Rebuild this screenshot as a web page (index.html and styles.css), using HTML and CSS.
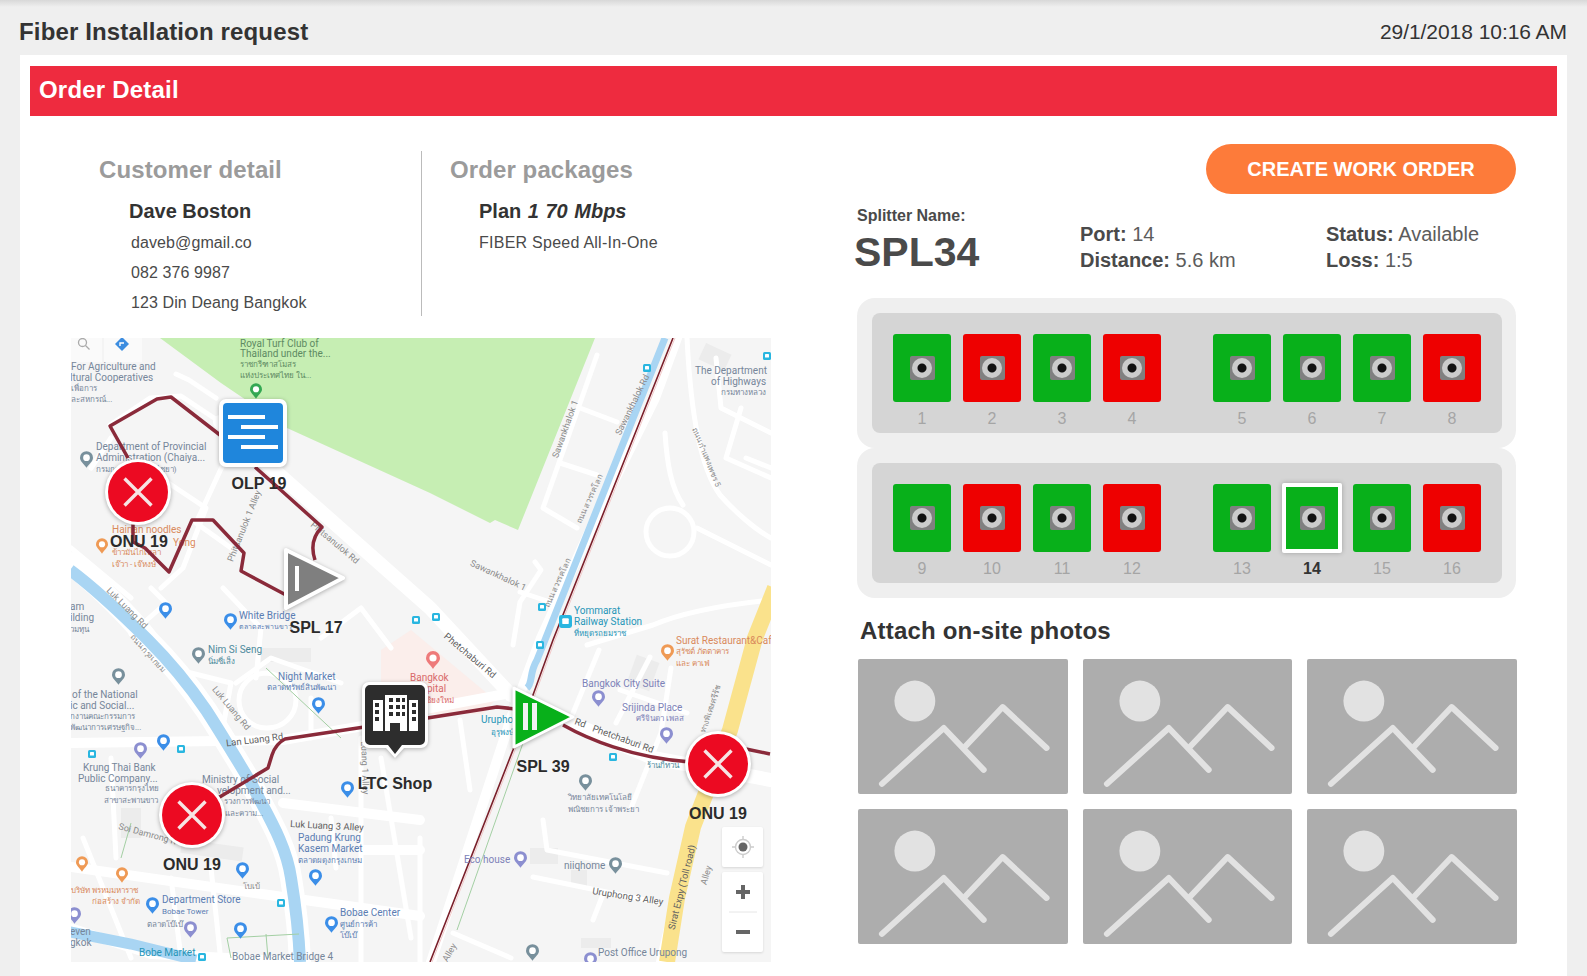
FILE: index.html
```html
<!DOCTYPE html>
<html lang="en">
<head>
    <meta charset="UTF-8">
    <meta name="viewport" content="width=device-width, initial-scale=1.0">
    <title>Fiber Installation request</title>
    <link rel="stylesheet" href="styles.css">
</head>
<body>
    <svg class="defs" width="0" height="0" aria-hidden="true">
        <symbol id="photo-icon" viewBox="0 0 210 135">
            <circle class="ph-sun" cx="57" cy="42" r="20.5"/>
            <polyline class="ph-line" points="24,125 86,69 126,111"/>
            <polyline class="ph-line" points="107,88 145,48 189,89"/>
        </symbol>
        <symbol id="pin" viewBox="0 0 14 18" overflow="visible">
            <path fill="currentColor" d="M7 0a7 7 0 0 1 7 7c0 4-4 6-7 11C4 13 0 11 0 7a7 7 0 0 1 7-7z"/>
            <circle cx="7" cy="7" r="3.6" fill="#fff"/>
        </symbol>
        <symbol id="bus" viewBox="0 0 8 8">
            <rect width="8" height="8" rx="1.5" fill="#29b6e0"/>
            <rect x="2" y="2" width="4" height="3.6" rx=".6" fill="#fff"/>
        </symbol>
        <symbol id="onu" viewBox="-34 -34 68 68" overflow="visible">
            <circle r="33" fill="#fff"/>
            <circle r="30" fill="#ec0a22"/>
            <path d="M-13.5-13.5L13.5 13.5M13.5-13.5L-13.5 13.5" stroke="#f6e4e4" stroke-width="3.4"/>
        </symbol>
    </svg>

    <header class="page-head">
        <h1>Fiber Installation request</h1>
        <span class="page-date">29/1/2018 10:16 AM</span>
    </header>

    <main class="panel">
        <div class="order-bar">Order Detail</div>
        <div class="order-body">
            <section class="left-col">
                <div class="info-row">
                    <div class="info-col customer">
                        <h2>Customer detail</h2>
                        <p class="info-name">Dave Boston</p>
                        <p class="info-line">daveb@gmail.co</p>
                        <p class="info-line">082 376 9987</p>
                        <p class="info-line">123 Din Deang Bangkok</p>
                    </div>
                    <div class="info-col packages">
                        <h2>Order packages</h2>
                        <p class="info-name">Plan <em>1 70 Mbps</em></p>
                        <p class="info-line">FIBER Speed All-In-One</p>
                    </div>
                </div>

                <svg class="map" viewBox="0 0 700 624" width="700" height="624">
                    <!-- areas -->
                    <polygon class="m-park" points="89,0 150,45 216,90 359,155 419,185 424,182 447,192 524,0"/>
                    <polygon class="m-hospital" points="310,312 340,292 424,362 412,376 310,376"/>
                    <rect class="m-block" x="190" y="310" width="50" height="14"/>
                    <rect class="m-block" x="630" y="10" width="28" height="18" transform="rotate(25 644 19)"/>
                    <rect class="m-block" x="110" y="505" width="62" height="14" transform="rotate(8 140 512)"/>
                    <rect class="m-block" x="459" y="510" width="28" height="16"/>
                    <rect class="m-block" x="500" y="532" width="16" height="16"/>
                    <rect class="m-block" x="510" y="600" width="30" height="10"/>
                    <rect class="m-block" x="560" y="320" width="24" height="30" transform="rotate(20 572 335)"/>
                    <rect class="m-block" x="50" y="470" width="20" height="30"/>

                    <!-- roads -->
                    <g class="m-roads">
                        <path class="r-wide" d="M149 84L359 270L440 357L500 385L582 420L700 442"/>
                        <path class="r-canal" d="M-1 225C30 250 60 280 77 302C100 325 120 350 135 372C150 395 165 420 180 445C195 475 215 505 220 540C225 570 228 600 229 624"/>
                        <path class="r-mid" d="M-1 590L80 616L230 624"/>
                        <path class="r-mid" d="M-1 405L212 402L292 388L349 372L440 355"/>
                        <path class="r-mid" d="M606 0L584 60L520 190L470 300L440 380L360 624"/>
                        <path class="r-mid" d="M720 236L684 300L659 392L622 489L590 624"/>
                        <path class="r-mid" d="M0 529L212 559L349 578"/>
                        <path class="r-mid" d="M212 465L349 482M292 512L349 512"/>
                        <path class="r-thin" d="M616 0C620 80 630 130 649 157C665 175 685 192 700 200"/>
                        <path class="r-thin" d="M594 95C596 125 600 150 612 167M626 190L700 227"/>
                        <circle class="r-ring" cx="599" cy="194" r="24"/>
                        <path class="r-thin" d="M526 17L472 170L506 190M509 70L546 84M489 125L526 137"/>
                        <path class="r-thin" d="M464 224L470 232L449 264L442 307M449 254L479 264"/>
                        <path class="r-thin" d="M516 307L582 287C610 275 650 267 700 262"/>
                        <path class="r-thin" d="M645 20L650 70L700 95M670 70L655 120L700 140M675 120L700 130"/>
                        <path class="r-thin" d="M472 482L476 512L596 535M462 539L589 565M522 582L531 559"/>
                        <path class="r-thin" d="M382 595L440 620M389 382L399 452"/>
                        <path class="r-thin" d="M549 352L616 375M579 319L545 385M528 312L500 380"/>
                        <path class="r-thin" d="M600 330L590 395L560 470"/>
                        <path class="r-thin" d="M39 87L79 60L110 58L149 84M105 36L118 42L145 60"/>
                        <path class="r-thin" d="M60 120L120 160L135 170L112 230L90 250M40 100L20 130M0 210L60 260"/>
                        <path class="r-thin" d="M155 120L125 185L160 210M152 250L190 290L185 340"/>
                        <path class="r-thin" d="M100 330L160 345L150 400M165 345L200 320L270 345M240 360L240 400"/>
                        <path class="r-thin" d="M196 335C215 338 225 350 225 362C225 378 212 390 196 390C180 390 168 378 168 362C168 348 180 335 196 335"/>
                        <path class="r-thin" d="M290 400L290 624M40 420L45 520M12 500L60 620M100 540L110 620M140 530L150 624"/>
                        <path class="r-thin" d="M310 420L340 600M260 480L265 530M349 500L349 624"/>
                        <path class="r-thin" d="M60 296L95 265L80 250M320 310L290 270L250 300"/>
                    </g>

                    <!-- water -->
                    <path class="m-canal" d="M-1 232C30 255 60 285 77 302C100 325 120 350 135 372C150 395 165 420 180 445C195 475 215 505 220 540C225 570 228 600 229 624"/>
                    <path class="m-canal-sm" d="M594 0L472 307L466 322C458 335 462 345 456 350"/>
                    <path class="m-canal-bt" d="M-1 594L60 606L125 622"/>

                    <!-- expressway -->
                    <path class="m-highway" d="M704 250L684 300L659 392L622 489L606 560L596 624"/>

                    <!-- rail and thin lines -->
                    <path class="m-green" d="M452 405L386 592M60 485L50 520M195 330L270 400"/>
                    <path class="m-green" d="M156 600L228 596M156 600L160 620M195 596L197 620"/>
                    <path class="m-rail-pale" d="M604 0L484 302L444 412L361 624"/>
                    <path class="m-rail" d="M602 0L482 302L442 412L359 624"/>

                    <!-- map labels -->
                    <g class="m-labels">
                        <text class="t-park" x="169" y="9">Royal Turf Club of</text>
                        <text class="t-park" x="169" y="19">Thailand under the...</text>
                        <text class="t-park t-sm" x="169" y="29">ราชกรีฑาสโมสร</text>
                        <text class="t-park t-sm" x="169" y="40">แห่งประเทศไทย ใน...</text>
                        <text class="t-gov" x="0" y="32">For Agriculture and</text>
                        <text class="t-gov" x="-1" y="43">ltural Cooperatives</text>
                        <text class="t-gov t-sm" x="0" y="53">เพื่อการ</text>
                        <text class="t-gov t-sm" x="0" y="64">ละสหกรณ์...</text>
                        <text class="t-gov" x="25" y="112">Department of Provincial</text>
                        <text class="t-gov" x="25" y="123">Administration (Chaiya...</text>
                        <text class="t-gov t-sm" x="25" y="134">กรมการปกครอง (ไชยา)</text>
                        <text class="t-food" x="41" y="195">Hainan noodles</text>
                        <text class="t-food" x="102" y="208">Yong</text>
                        <text class="t-food t-sm" x="41" y="217">ข้าวมันไก่เหลา</text>
                        <text class="t-food t-sm" x="41" y="229">เจ๊วา - เจ๊หงษ์</text>
                        <text class="t-gov" x="624" y="36">The Department</text>
                        <text class="t-gov" x="640" y="47">of Highways</text>
                        <text class="t-gov t-sm" x="650" y="57">กรมทางหลวง</text>
                        <text class="t-road" transform="translate(564 68) rotate(-64)" text-anchor="middle">Sawankhalok Rd</text>
                        <text class="t-road" transform="translate(497 92) rotate(-70)" text-anchor="middle">Sawankhalok 1</text>
                        <text class="t-road" transform="translate(426 240) rotate(25)" text-anchor="middle">Sawankhalok 1</text>
                        <text class="t-road t-sm" transform="translate(521 162) rotate(-66)" text-anchor="middle">ถนน สวรรคโลก</text>
                        <text class="t-road t-sm" transform="translate(489 246) rotate(-66)" text-anchor="middle">ถนน สวรรคโลก</text>
                        <text class="t-road t-sm" transform="translate(633 120) rotate(68)" text-anchor="middle">ถนน กำแพงเพชร 5</text>
                        <text class="t-rail" x="503" y="276">Yommarat</text>
                        <text class="t-rail" x="503" y="287">Railway Station</text>
                        <text class="t-rail t-sm" x="503" y="298">ที่หยุดรถยมราช</text>
                        <text class="t-food" x="605" y="306">Surat Restaurant&amp;Caf</text>
                        <text class="t-food t-sm" x="605" y="316">สุรัชต์ ภัตตาคาร</text>
                        <text class="t-food t-sm" x="605" y="328">และ คาเฟ่</text>
                        <text class="t-road" transform="translate(262 207) rotate(40)" text-anchor="middle">Phitsanulok Rd</text>
                        <text class="t-road" transform="translate(176 189) rotate(-68)" text-anchor="middle">Phitsanulok 1 Alley</text>
                        <text class="t-road" transform="translate(54 272) rotate(45)" text-anchor="middle">Luk Luang Rd</text>
                        <text class="t-road t-sm" transform="translate(75 317) rotate(48)" text-anchor="middle">ถนน กรุงเกษม</text>
                        <text class="t-shop" x="168" y="281">White Bridge</text>
                        <text class="t-shop t-xs" x="168" y="291">ตลาดสะพานขาว</text>
                        <text class="t-gov" x="-1" y="272">am</text>
                        <text class="t-gov" x="-1" y="283">ilding</text>
                        <text class="t-gov t-sm" x="-1" y="294">วมทุน</text>
                        <text class="t-teal" x="137" y="315">Nim Si Seng</text>
                        <text class="t-teal t-sm" x="137" y="326">นิ่มซี่เส็ง</text>
                        <text class="t-shop" x="207" y="342">Night Market</text>
                        <text class="t-shop t-sm" x="196" y="352">ตลาดทรัพย์สินพัฒนา</text>
                        <text class="t-road" transform="translate(158 372) rotate(50)" text-anchor="middle">Luk Luang Rd</text>
                        <text class="t-road-d" transform="translate(184 405) rotate(-7)" text-anchor="middle">Lan Luang Rd</text>
                        <text class="t-gov" x="1" y="360">of the National</text>
                        <text class="t-gov" x="-1" y="371">ic and Social...</text>
                        <text class="t-gov t-sm" x="-1" y="381">กงานคณะกรรมการ</text>
                        <text class="t-gov t-sm" x="-1" y="392">พัฒนาการเศรษฐกิจ...</text>
                        <text class="t-gov" x="12" y="433">Krung Thai Bank</text>
                        <text class="t-gov" x="7" y="444">Public Company...</text>
                        <text class="t-gov t-sm" x="34" y="453">ธนาคารกรุงไทย</text>
                        <text class="t-gov t-sm" x="33" y="465">สาขาสะพานขาว</text>
                        <text class="t-gov" x="131" y="445">Ministry of Social</text>
                        <text class="t-gov" x="146" y="456">velopment and...</text>
                        <text class="t-gov t-sm" x="153" y="466">รวงการพัฒนา</text>
                        <text class="t-gov t-sm" x="154" y="478">และความ...</text>
                        <text class="t-road" transform="translate(47 491) rotate(15)">Soi Damrong R</text>
                        <text class="t-road-d" transform="translate(219 489) rotate(3)">Luk Luang 3 Alley</text>
                        <text class="t-shop" x="227" y="503">Padung Krung</text>
                        <text class="t-shop" x="227" y="514">Kasem Market</text>
                        <text class="t-shop t-sm" x="227" y="525">ตลาดผดุงกรุงเกษม</text>
                        <text class="t-road t-sm" x="172" y="551">โบเบ้</text>
                        <text class="t-food t-sm" x="0" y="555">บริษัท พรหมมหาราช</text>
                        <text class="t-food t-sm" x="21" y="566">ก่อสร้าง จำกัด</text>
                        <text class="t-shop" x="91" y="565">Department Store</text>
                        <text class="t-shop t-sm" x="91" y="576">Bobae Tower</text>
                        <text class="t-gov t-sm" x="76" y="589">ตลาดโบ๊เบ๊</text>
                        <text class="t-shop" x="269" y="578">Bobae Center</text>
                        <text class="t-shop t-sm" x="269" y="589">ศูนย์การค้า</text>
                        <text class="t-shop t-sm" x="269" y="600">โบ๊เบ๊</text>
                        <text class="t-gov" x="-1" y="597">even</text>
                        <text class="t-gov" x="-1" y="608">gkok</text>
                        <text class="t-rail" x="68" y="618">Bobe Market</text>
                        <text class="t-gov" x="161" y="622">Bobae Market Bridge 4</text>
                        <text class="t-hosp" x="339" y="343">Bangkok</text>
                        <text class="t-hosp" x="356" y="354">pital</text>
                        <text class="t-hosp t-sm" x="352" y="365">เชียงใหม่</text>
                        <text class="t-rail" x="410" y="385">Uruphong</text>
                        <text class="t-rail t-sm" x="420" y="397">อุรุพงษ์</text>
                        <text class="t-road-d" transform="translate(397 320) rotate(40)" text-anchor="middle">Phetchaburi Rd</text>
                        <text class="t-road-d" transform="translate(551 404) rotate(20)" text-anchor="middle">Phetchaburi Rd</text>
                        <text class="t-road-d" transform="translate(503 386) rotate(20)">Rd</text>
                        <text class="t-hotel" x="511" y="349">Bangkok City Suite</text>
                        <text class="t-hotel" x="551" y="373">Srijinda Place</text>
                        <text class="t-hotel t-sm" x="565" y="383">ศรีจินดา เพลส</text>
                        <text class="t-teal t-sm" x="576" y="430">ร้านกิ้ทวน</text>
                        <text class="t-gov t-sm" x="497" y="462">วิทยาลัยเทคโนโลยี</text>
                        <text class="t-gov t-sm" x="497" y="474">พณิชยการ เจ้าพระยา</text>
                        <text class="t-hotel" x="393" y="525">Eco house</text>
                        <text class="t-gov" x="493" y="531">niiqhome</text>
                        <text class="t-road-d" transform="translate(521 556) rotate(9)">Uruphong 3 Alley</text>
                        <text class="t-gov" x="527" y="618">Post Office Urupong</text>
                        <text class="t-road-d" transform="translate(614 550) rotate(-76)" text-anchor="middle">Sirat Expy (Toll road)</text>
                        <text class="t-road t-sm" transform="translate(642 372) rotate(-72)" text-anchor="middle">ทางพิเศษศรีรัช</text>
                        <text class="t-road" transform="translate(638 538) rotate(-74)" text-anchor="middle">Alley</text>
                        <text class="t-road" transform="translate(381 616) rotate(-60)" text-anchor="middle">Alley</text>
                        <text class="t-road" transform="translate(291 430) rotate(88)" text-anchor="middle">Luang 1 Alley</text>
                    </g>

                    <!-- pins -->
                    <g>
                        <use href="#pin" class="p-green" x="179" y="45" width="12" height="16"/>
                        <use href="#pin" class="p-gov" x="9" y="113" width="13" height="17"/>
                        <use href="#pin" class="p-food" x="25" y="200" width="12" height="16"/>
                        <use href="#pin" class="p-shop" x="88" y="264" width="13" height="17"/>
                        <use href="#pin" class="p-shop" x="153" y="275" width="13" height="17"/>
                        <use href="#pin" class="p-gov" x="121" y="309" width="13" height="17"/>
                        <use href="#pin" class="p-gov" x="41" y="330" width="13" height="17"/>
                        <use href="#pin" class="p-shop" x="241" y="359" width="13" height="17"/>
                        <use href="#pin" class="p-shop" x="86" y="396" width="13" height="17"/>
                        <use href="#pin" class="p-hotel" x="63" y="404" width="13" height="17"/>
                        <use href="#pin" class="p-shop" x="270" y="443" width="13" height="17"/>
                        <use href="#pin" class="p-shop" x="165" y="524" width="13" height="17"/>
                        <use href="#pin" class="p-shop" x="238" y="531" width="13" height="17"/>
                        <use href="#pin" class="p-food" x="5" y="518" width="12" height="16"/>
                        <use href="#pin" class="p-food" x="45" y="529" width="12" height="16"/>
                        <use href="#pin" class="p-shop" x="75" y="559" width="13" height="17"/>
                        <use href="#pin" class="p-hotel" x="113" y="583" width="13" height="17"/>
                        <use href="#pin" class="p-shop" x="163" y="584" width="13" height="17"/>
                        <use href="#pin" class="p-shop" x="254" y="578" width="13" height="17"/>
                        <use href="#pin" class="p-hotel" x="-3" y="569" width="13" height="17"/>
                        <use href="#pin" class="p-hosp" x="355" y="313" width="14" height="18"/>
                        <use href="#pin" class="p-food" x="590" y="306" width="13" height="17"/>
                        <use href="#pin" class="p-hotel" x="521" y="352" width="13" height="17"/>
                        <use href="#pin" class="p-hotel" x="589" y="389" width="13" height="17"/>
                        <use href="#pin" class="p-gov" x="508" y="436" width="13" height="17"/>
                        <use href="#pin" class="p-hotel" x="443" y="513" width="13" height="17"/>
                        <use href="#pin" class="p-gov" x="538" y="519" width="13" height="17"/>
                        <use href="#pin" class="p-gov" x="455" y="606" width="13" height="17"/>
                        <use href="#pin" class="p-hotel" x="513" y="614" width="13" height="17"/>
                        <use href="#bus" x="572" y="26" width="8" height="8"/>
                        <use href="#bus" x="467" y="265" width="8" height="8"/>
                        <use href="#bus" x="361" y="275" width="8" height="8"/>
                        <use href="#bus" x="465" y="303" width="8" height="8"/>
                        <use href="#bus" x="341" y="278" width="8" height="8"/>
                        <use href="#bus" x="106" y="407" width="8" height="8"/>
                        <use href="#bus" x="17" y="412" width="8" height="8"/>
                        <use href="#bus" x="206" y="561" width="8" height="8"/>
                        <use href="#bus" x="127" y="615" width="8" height="8"/>
                        <use href="#bus" x="538" y="415" width="8" height="8"/>
                        <use href="#bus" x="692" y="14" width="8" height="8"/>
                        <use href="#bus" x="488" y="277" width="13" height="13"/>
                    </g>

                    <!-- fiber routes -->
                    <g class="m-route">
                        <path d="M57 120L39 88L86 61L100 59L149 97"/>
                        <path d="M184 129L212 154L251 189C242 198 240 210 244 222"/>
                        <path d="M62 184L62 204L74 210L98 234L121 182L142 182L173 215L170 233L215 257"/>
                        <path d="M147 460L197 430L201 417C204 408 208 404 214 401L300 388"/>
                        <path d="M350 381L426 369L445 371"/>
                        <path d="M492 387C515 400 560 420 620 424"/>
                        <path d="M675 411L699 416"/>
                    </g>

                    <!-- markers -->
                    <g class="m-marker">
                        <rect x="148" y="61" width="68" height="68" rx="7" fill="#fff"/>
                        <rect x="152" y="65" width="60" height="60" rx="4" fill="#1f86dc"/>
                        <path class="olp-lines" d="M157 79H194M170 89H207M157 99H194M170 109H207"/>
                    </g>
                    <use href="#onu" class="m-marker" x="33" y="120" width="68" height="68"/>
                    <use href="#onu" class="m-marker" x="87" y="443" width="68" height="68"/>
                    <use href="#onu" class="m-marker" x="613" y="392" width="68" height="68"/>

                    <g class="m-marker">
                        <polygon points="215,212 272,240 215,270" fill="#7f7f7f" stroke="#fff" stroke-width="4" stroke-linejoin="round"/>
                        <rect x="224" y="228" width="4" height="25" fill="#fff"/>
                    </g>
                    <g class="m-marker">
                        <polygon points="443,350 502,379 443,409" fill="#08b01a" stroke="#fff" stroke-width="3" stroke-linejoin="round"/>
                        <rect x="452" y="365" width="5" height="27" fill="#f1f1f1"/>
                        <rect x="461" y="365" width="5" height="27" fill="#f1f1f1"/>
                    </g>
                    <g class="m-marker">
                        <path d="M298 344H350a7 7 0 0 1 7 7V403a7 7 0 0 1-7 7H333L324 420L315 410H298a7 7 0 0 1-7-7V351a7 7 0 0 1 7-7z" fill="#fff"/>
                        <path d="M299 347H349a5 5 0 0 1 5 5V402a5 5 0 0 1-5 5H331L324 416L317 407H299a5 5 0 0 1-5-5V352a5 5 0 0 1 5-5z" fill="#2d2d2d"/>
                        <path fill="#fff" d="M302 362H312V393H302zM314 357H336V393H329V385H319V393H314zM338 362H347V393H338z"/>
                        <path fill="#2d2d2d" d="M304 365h4v4h-4zM304 372h4v4h-4zM304 379h4v4h-4zM318 360h4v4h-4zM325 360h4v4h-4zM331 360h3v4h-3zM318 367h4v4h-4zM325 367h4v4h-4zM331 367h3v4h-3zM318 374h4v4h-4zM325 374h4v4h-4zM331 374h3v4h-3zM341 365h4v4h-4zM341 372h4v4h-4zM341 379h4v4h-4z"/>
                    </g>

                    <g class="m-names">
                        <text x="188" y="151">OLP 19</text>
                        <text x="68" y="209">ONU 19</text>
                        <text x="245" y="295">SPL 17</text>
                        <text x="324" y="451">LTC Shop</text>
                        <text x="121" y="532">ONU 19</text>
                        <text x="472" y="434">SPL 39</text>
                        <text x="647" y="481">ONU 19</text>
                    </g>

                    <!-- map controls -->
                    <rect class="m-ctrl-bar" x="0" y="0" width="71" height="24"/>
                    <circle class="m-search" cx="11.5" cy="4.5" r="4"/>
                    <path class="m-search" d="M14.5 7.5L18.5 11.5"/>
                    <path class="m-sep" d="M32 0V24"/>
                    <path d="M51 -1L58 6L51 13L44 6z" fill="#3d8de0"/>
                    <path d="M49 8V5H53" fill="none" stroke="#fff" stroke-width="1.4"/>

                    <rect class="m-ctrl" x="651" y="489" width="41" height="40" rx="2"/>
                    <circle cx="672" cy="509" r="4.5" fill="#666"/>
                    <circle cx="672" cy="509" r="7.5" fill="none" stroke="#ccc" stroke-width="1.4"/>
                    <path d="M672 498V502M672 516V520M661 509H665M679 509H683" stroke="#ccc" stroke-width="1.4"/>
                    <rect class="m-ctrl" x="651" y="534" width="41" height="80" rx="2"/>
                    <path d="M672 547V561M665 554H679M665 594H679" stroke="#666" stroke-width="4"/>
                    <path d="M658 574H686" stroke="#e6e6e6" stroke-width="1"/>
                </svg>
            </section>

            <section class="right-col">
                <button class="create-btn" type="button">CREATE WORK ORDER</button>

                <div class="splitter-info">
                    <div class="splitter-name">
                        <p class="splitter-caption">Splitter Name:</p>
                        <p class="splitter-title">SPL34</p>
                    </div>
                    <div class="splitter-stat">
                        <p><b>Port:</b> 14</p>
                        <p><b>Distance:</b> 5.6 km</p>
                    </div>
                    <div class="splitter-stat">
                        <p><b>Status:</b> Available</p>
                        <p><b>Loss:</b> 1:5</p>
                    </div>
                </div>

                <div class="tray-box">
                    <div class="tray">
                        <div class="port-group">
                            <div class="port"><div class="port-box on"><span class="socket"><span class="eye"></span></span></div><span class="port-num">1</span></div>
                            <div class="port"><div class="port-box off"><span class="socket"><span class="eye"></span></span></div><span class="port-num">2</span></div>
                            <div class="port"><div class="port-box on"><span class="socket"><span class="eye"></span></span></div><span class="port-num">3</span></div>
                            <div class="port"><div class="port-box off"><span class="socket"><span class="eye"></span></span></div><span class="port-num">4</span></div>
                        </div>
                        <div class="port-group">
                            <div class="port"><div class="port-box on"><span class="socket"><span class="eye"></span></span></div><span class="port-num">5</span></div>
                            <div class="port"><div class="port-box on"><span class="socket"><span class="eye"></span></span></div><span class="port-num">6</span></div>
                            <div class="port"><div class="port-box on"><span class="socket"><span class="eye"></span></span></div><span class="port-num">7</span></div>
                            <div class="port"><div class="port-box off"><span class="socket"><span class="eye"></span></span></div><span class="port-num">8</span></div>
                        </div>
                    </div>
                </div>
                <div class="tray-box">
                    <div class="tray">
                        <div class="port-group">
                            <div class="port"><div class="port-box on"><span class="socket"><span class="eye"></span></span></div><span class="port-num">9</span></div>
                            <div class="port"><div class="port-box off"><span class="socket"><span class="eye"></span></span></div><span class="port-num">10</span></div>
                            <div class="port"><div class="port-box on"><span class="socket"><span class="eye"></span></span></div><span class="port-num">11</span></div>
                            <div class="port"><div class="port-box off"><span class="socket"><span class="eye"></span></span></div><span class="port-num">12</span></div>
                        </div>
                        <div class="port-group">
                            <div class="port"><div class="port-box on"><span class="socket"><span class="eye"></span></span></div><span class="port-num">13</span></div>
                            <div class="port selected"><div class="port-box on"><span class="socket"><span class="eye"></span></span></div><span class="port-num">14</span></div>
                            <div class="port"><div class="port-box on"><span class="socket"><span class="eye"></span></span></div><span class="port-num">15</span></div>
                            <div class="port"><div class="port-box off"><span class="socket"><span class="eye"></span></span></div><span class="port-num">16</span></div>
                        </div>
                    </div>
                </div>

                <h2 class="photos-title">Attach on-site photos</h2>
                <div class="photos">
                    <div class="photo"><svg><use href="#photo-icon"/></svg></div>
                    <div class="photo"><svg><use href="#photo-icon"/></svg></div>
                    <div class="photo"><svg><use href="#photo-icon"/></svg></div>
                    <div class="photo"><svg><use href="#photo-icon"/></svg></div>
                    <div class="photo"><svg><use href="#photo-icon"/></svg></div>
                    <div class="photo"><svg><use href="#photo-icon"/></svg></div>
                </div>
            </section>
        </div>
    </main>
</body>
</html>
```

FILE: styles.css
```css
body {
    font-family: "Liberation Sans", Arial, sans-serif;
    margin: 0;
    padding: 0;
    background-color: #efefef;
    color: #333;
    overflow: hidden;
}

p, h1, h2 {
    margin: 0;
}

.defs {
    position: absolute;
}

/* page header */
.page-head {
    display: flex;
    justify-content: space-between;
    align-items: center;
    height: 55px;
    padding: 9px 20px 0 19px;
    box-sizing: border-box;
    background: linear-gradient(#d8d8d8, #efefef 7px);
}

.page-head h1 {
    font-size: 24px;
    letter-spacing: 0.15px;
    color: #333;
}

.page-date {
    font-size: 21px;
    letter-spacing: -0.05px;
}

.panel {
    margin: 0 20px;
    padding: 11px 10px 14px;
    background-color: #fff;
}

.order-bar {
    height: 50px;
    line-height: 47px;
    padding-left: 9px;
    background-color: #ee2b3f;
    color: #fff;
    font-size: 24px;
    letter-spacing: 0.2px;
    font-weight: bold;
}

.order-body {
    display: flex;
}

/* left column */
.left-col {
    width: 827px;
    padding-top: 35px;
}

.info-row {
    display: flex;
    height: 165px;
}

.info-col {
    box-sizing: border-box;
}

.info-col h2 {
    margin-top: 5px;
    font-size: 24px;
    line-height: 28px;
    letter-spacing: 0.1px;
    color: #9b9b9b;
}

.customer {
    width: 392px;
    padding-left: 69px;
    border-right: 1px solid #bbb;
}

.packages {
    padding-left: 28px;
}

.info-name {
    margin: 15px 0 5px 30px;
    font-size: 20px;
    line-height: 24px;
    font-weight: bold;
}

.packages .info-name {
    margin-left: 29px;
    word-spacing: 1px;
}

.info-name em {
    font-style: italic;
}

.info-line {
    margin-left: 32px;
    font-size: 16px;
    line-height: 30px;
    letter-spacing: 0.1px;
    color: #4a4a4a;
}

.packages .info-line {
    margin-left: 29px;
    letter-spacing: 0.25px;
}

/* map */
.map {
    display: block;
    margin: 22px 0 0 41px;
    background-color: #f5f5f5;
    font-family: Roboto, "Liberation Sans", sans-serif;
    font-size: 10px;
}

.m-park { fill: #c6eeb3; }
.m-hospital { fill: #fbeeeb; }
.m-block { fill: #ececec; }

.m-roads path, .m-roads circle {
    fill: none;
    stroke: #fff;
    stroke-linecap: round;
    stroke-linejoin: round;
}

.m-roads .r-wide { stroke-width: 14px; }
.m-roads .r-canal { stroke-width: 22px; }
.m-roads .r-mid { stroke-width: 10px; }
.m-roads .r-thin { stroke-width: 5px; }
.m-roads .r-ring { stroke-width: 5px; }

.m-canal, .m-canal-sm, .m-canal-bt, .m-highway, .m-green, .m-rail, .m-rail-pale {
    fill: none;
}

.m-canal { stroke: #a9d5f3; stroke-width: 12px; }
.m-canal-sm { stroke: #a9d5f3; stroke-width: 7px; }
.m-canal-bt { stroke: #a9d5f3; stroke-width: 11px; }
.m-highway { stroke: #fae28c; stroke-width: 16px; }
.m-green { stroke: #a3cfa3; stroke-width: 1px; }
.m-rail { stroke: #7a1f2a; stroke-width: 1.6px; }
.m-rail-pale { stroke: #f2c9c9; stroke-width: 1px; }

.m-route path {
    fill: none;
    stroke: #8a2a3a;
    stroke-width: 3.5px;
    stroke-linejoin: round;
}

.m-marker {
    filter: drop-shadow(0 1px 2px rgba(0, 0, 0, 0.3));
}

.olp-lines {
    fill: none;
    stroke: #fff;
    stroke-width: 4px;
}

.m-names text {
    font-family: "Liberation Sans", Arial, sans-serif;
    font-size: 16px;
    font-weight: bold;
    fill: #2b2b2b;
    text-anchor: middle;
}

.m-labels .t-sm { font-size: 8px; }
.m-labels .t-xs { font-size: 7px; }
.t-park { fill: #5d8a62; }
.t-gov { fill: #76869a; }
.t-food { fill: #d98a5c; }
.t-road { fill: #8a8a8a; font-size: 9px; }
.t-road-d { fill: #5f5f5f; font-size: 9.5px; }
.t-rail { fill: #2596b8; }
.t-shop { fill: #5b7db3; }
.t-teal { fill: #4d8a9c; }
.t-hosp { fill: #d96a6a; }
.t-hotel { fill: #7d82b8; }

.p-green { color: #34a853; }
.p-gov { color: #78909c; }
.p-food { color: #ef9a55; }
.p-shop { color: #3b8ee8; }
.p-hotel { color: #8c8fd0; }
.p-hosp { color: #ee7a7a; }

.m-ctrl-bar { fill: #fafafa; }
.m-search { fill: none; stroke: #aaa; stroke-width: 1.3px; }
.m-sep { stroke: #eee; stroke-width: 1px; }

.m-ctrl {
    fill: #fff;
    filter: drop-shadow(0 1px 1px rgba(0, 0, 0, 0.12));
}

/* right column */
.right-col {
    width: 659px;
    padding-top: 28px;
}

.create-btn {
    display: block;
    width: 310px;
    height: 50px;
    margin-left: auto;
    border: none;
    border-radius: 25px;
    background-color: #fd7b3a;
    color: #fff;
    font-family: inherit;
    font-size: 20px;
    font-weight: bold;
    cursor: pointer;
}

.splitter-info {
    display: grid;
    grid-template-columns: 226px 246px 1fr;
    margin: 12px 0 24px -3px;
    color: #4a4a4a;
}

.splitter-name {
    padding-left: 3px;
}

.splitter-caption {
    font-size: 16px;
    line-height: 20px;
    font-weight: bold;
}

.splitter-title {
    margin: 4px 0 0 -3px;
    font-size: 41px;
    line-height: 44px;
    font-weight: bold;
}

.splitter-stat {
    padding-top: 15px;
    font-size: 20px;
    line-height: 26px;
    color: #5c5c5c;
}

.splitter-stat b {
    color: #4a4a4a;
}

.tray-box {
    padding: 15px 14px 15px 15px;
    background-color: #efefef;
    border-radius: 18px;
}

.tray {
    display: flex;
    gap: 52px;
    height: 120px;
    box-sizing: border-box;
    padding: 21px 0 0 21px;
    background-color: #d5d5d5;
    border-radius: 8px;
}

.port-group {
    display: flex;
    gap: 12px;
}

.port {
    width: 58px;
    text-align: center;
}

.port-box {
    display: flex;
    align-items: center;
    justify-content: center;
    box-sizing: border-box;
    height: 68px;
    border-radius: 3px;
}

.port-box.on { background-color: #08b01a; }
.port-box.off { background-color: #ee0000; }

.selected .port-box {
    border: 3px solid #fff;
    box-shadow: 0 0 0 1px #fff, 0 0 5px 1px rgba(0, 0, 0, 0.25);
    border-radius: 1px;
}

.socket {
    display: flex;
    align-items: center;
    justify-content: center;
    width: 25px;
    height: 24px;
    background-color: #808080;
    border-radius: 2px;
}

.eye {
    width: 20px;
    height: 20px;
    border-radius: 50%;
    background: radial-gradient(circle, #111 0, #111 4px, #ccc 5px);
}

.port-num {
    display: block;
    margin-top: 7px;
    font-size: 16px;
    line-height: 20px;
    color: #a5a5a5;
}

.selected .port-num {
    font-weight: bold;
    color: #333;
}

.photos-title {
    margin: 19px 0 14px 3px;
    font-size: 24px;
    line-height: 28px;
    letter-spacing: 0.2px;
    color: #333;
}

.photos {
    display: grid;
    grid-template-columns: repeat(3, 209.5px);
    grid-auto-rows: 135px;
    gap: 15px;
    margin-left: 1px;
}

.photo {
    background-color: #adadad;
    border-radius: 2px;
}

.photo svg {
    display: block;
    width: 100%;
    height: 135px;
}

.ph-sun { fill: #e2e2e2; }

.ph-line {
    fill: none;
    stroke: #e2e2e2;
    stroke-width: 6px;
    stroke-linecap: round;
    stroke-linejoin: round;
}
```
